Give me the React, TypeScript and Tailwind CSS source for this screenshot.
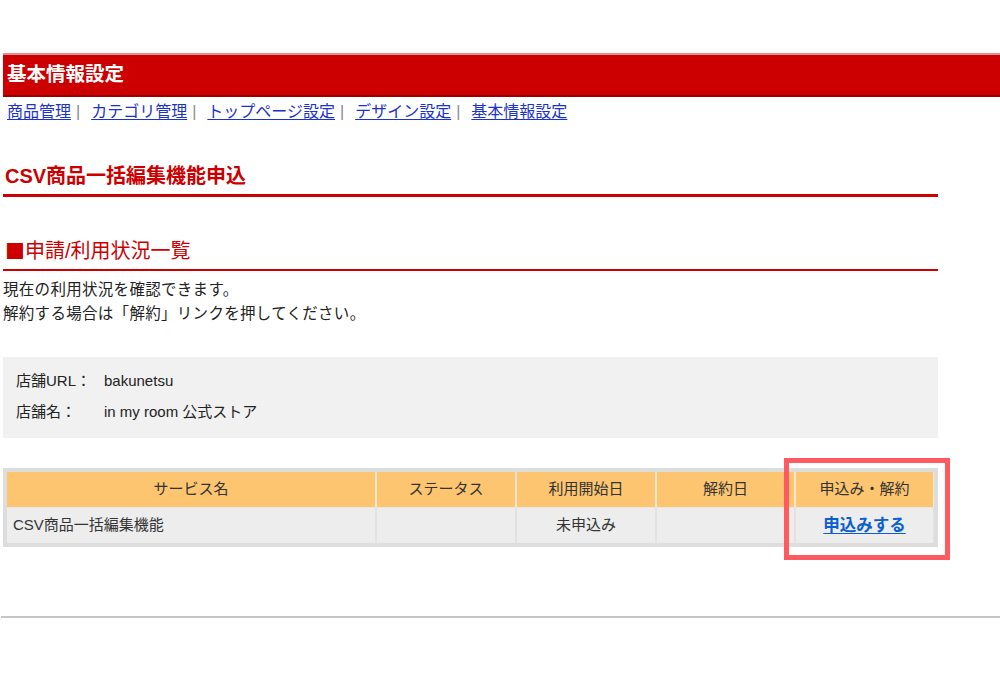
import React from "react";

const navItems = ["商品管理", "カテゴリ管理", "トップページ設定", "デザイン設定", "基本情報設定"];

export default function App() {
  return (
    <div className="w-[1000px] h-[700px] bg-white overflow-hidden font-['Liberation_Sans','Noto_Sans_CJK_JP',sans-serif] text-[#333]">
      <div className="pt-[53px]">
        {/* Header bar */}
        <div className="ml-[3px] border-t-2 border-[#e58c8c] bg-[#cc0000] h-[44px] border-b-2 border-b-[#9a0000] flex items-center pl-[4px]">
          <span className="text-white font-bold text-[19.5px] leading-none">基本情報設定</span>
        </div>
        {/* Nav */}
        <div className="mt-[5px] pl-[7px] flex items-center text-[16px] leading-[20px]">
          {navItems.map((n, i) => (
            <span key={n} className="flex items-center">
              <a className="text-[#1a33cc] underline underline-offset-2">{n}</a>
              {i < navItems.length - 1 && <span className="text-[#888] ml-[5px] mr-[11px]">|</span>}
            </span>
          ))}
        </div>

        <div className="pl-[3px] w-[938px]">
          {/* CSV heading */}
          <div className="mt-[40px] pb-[4px] border-b-[3px] border-[#cc0000]">
            <h1 className="pl-[2px] text-[20px] leading-[28px] font-bold text-[#cc0000]">CSV商品一括編集機能申込</h1>
          </div>

          {/* Section heading */}
          <div className="mt-[40px] pb-[4px] border-b-2 border-[#cc0000]">
            <h2 className="pl-[2px] h-[28px] flex items-center text-[20px] leading-[28px] text-[#cc0000]">
              <span className="font-['Noto_Sans_CJK_JP',sans-serif] leading-[28px]">■</span>
              <span>申請/利用状況一覧</span>
            </h2>
          </div>

          <div className="mt-[7px] text-[15.5px] leading-[24px] text-[#222] tracking-[0.3px]">
            <p>現在の利用状況を確認できます。</p>
            <p>解約する場合は「解約」リンクを押してください。</p>
          </div>

          {/* Store info */}
          <div className="mt-[31px] bg-[#f1f1f1] pt-[12px] pb-[14px] pl-[13px] text-[15px] leading-[24px] text-[#222] flex flex-col gap-[7px]">
            <div className="flex">
              <span className="w-[88px]">店舗URL：</span>
              <span>bakunetsu</span>
            </div>
            <div className="flex">
              <span className="w-[88px]">店舗名：</span>
              <span>in my room 公式ストア</span>
            </div>
          </div>

          {/* Table */}
          <div className="relative mt-[30px]">
            <div className="bg-[#dddddd] p-[4px] text-[15px] text-[#333]">
              <div className="grid grid-cols-[368px_138px_138px_137px_137px] gap-x-[2px] bg-[#f3e7d2]">
                <div className="bg-[#fdc56f] h-[35px] flex items-center justify-center">サービス名</div>
                <div className="bg-[#fdc56f] h-[35px] flex items-center justify-center">ステータス</div>
                <div className="bg-[#fdc56f] h-[35px] flex items-center justify-center">利用開始日</div>
                <div className="bg-[#fdc56f] h-[35px] flex items-center justify-center">解約日</div>
                <div className="bg-[#fdc56f] h-[35px] flex items-center justify-center">申込み・解約</div>
              </div>
              <div className="h-[1px] bg-[#e6e6e6]" />
              <div className="grid grid-cols-[368px_138px_138px_137px_137px] gap-x-[2px] bg-[#e2e2e2]">
                <div className="bg-[#ededed] h-[35px] flex items-center pl-[6px]">CSV商品一括編集機能</div>
                <div className="bg-[#ededed] h-[35px]" />
                <div className="bg-[#ededed] h-[35px] flex items-center justify-center">未申込み</div>
                <div className="bg-[#ededed] h-[35px]" />
                <div className="bg-[#ededed] h-[35px] flex items-center justify-center">
                  <a className="text-[#0b5fd0] text-[16.5px] font-bold underline underline-offset-2">申込みする</a>
                </div>
              </div>
            </div>
            <div className="absolute left-[781px] top-[-10px] w-[166px] h-[102px] border-[5px] border-[#ff5a5f]" />
          </div>
        </div>

        <div className="mt-[69px] ml-[1px] h-[2px] bg-[#c4c4c4]" />
      </div>
    </div>
  );
}
